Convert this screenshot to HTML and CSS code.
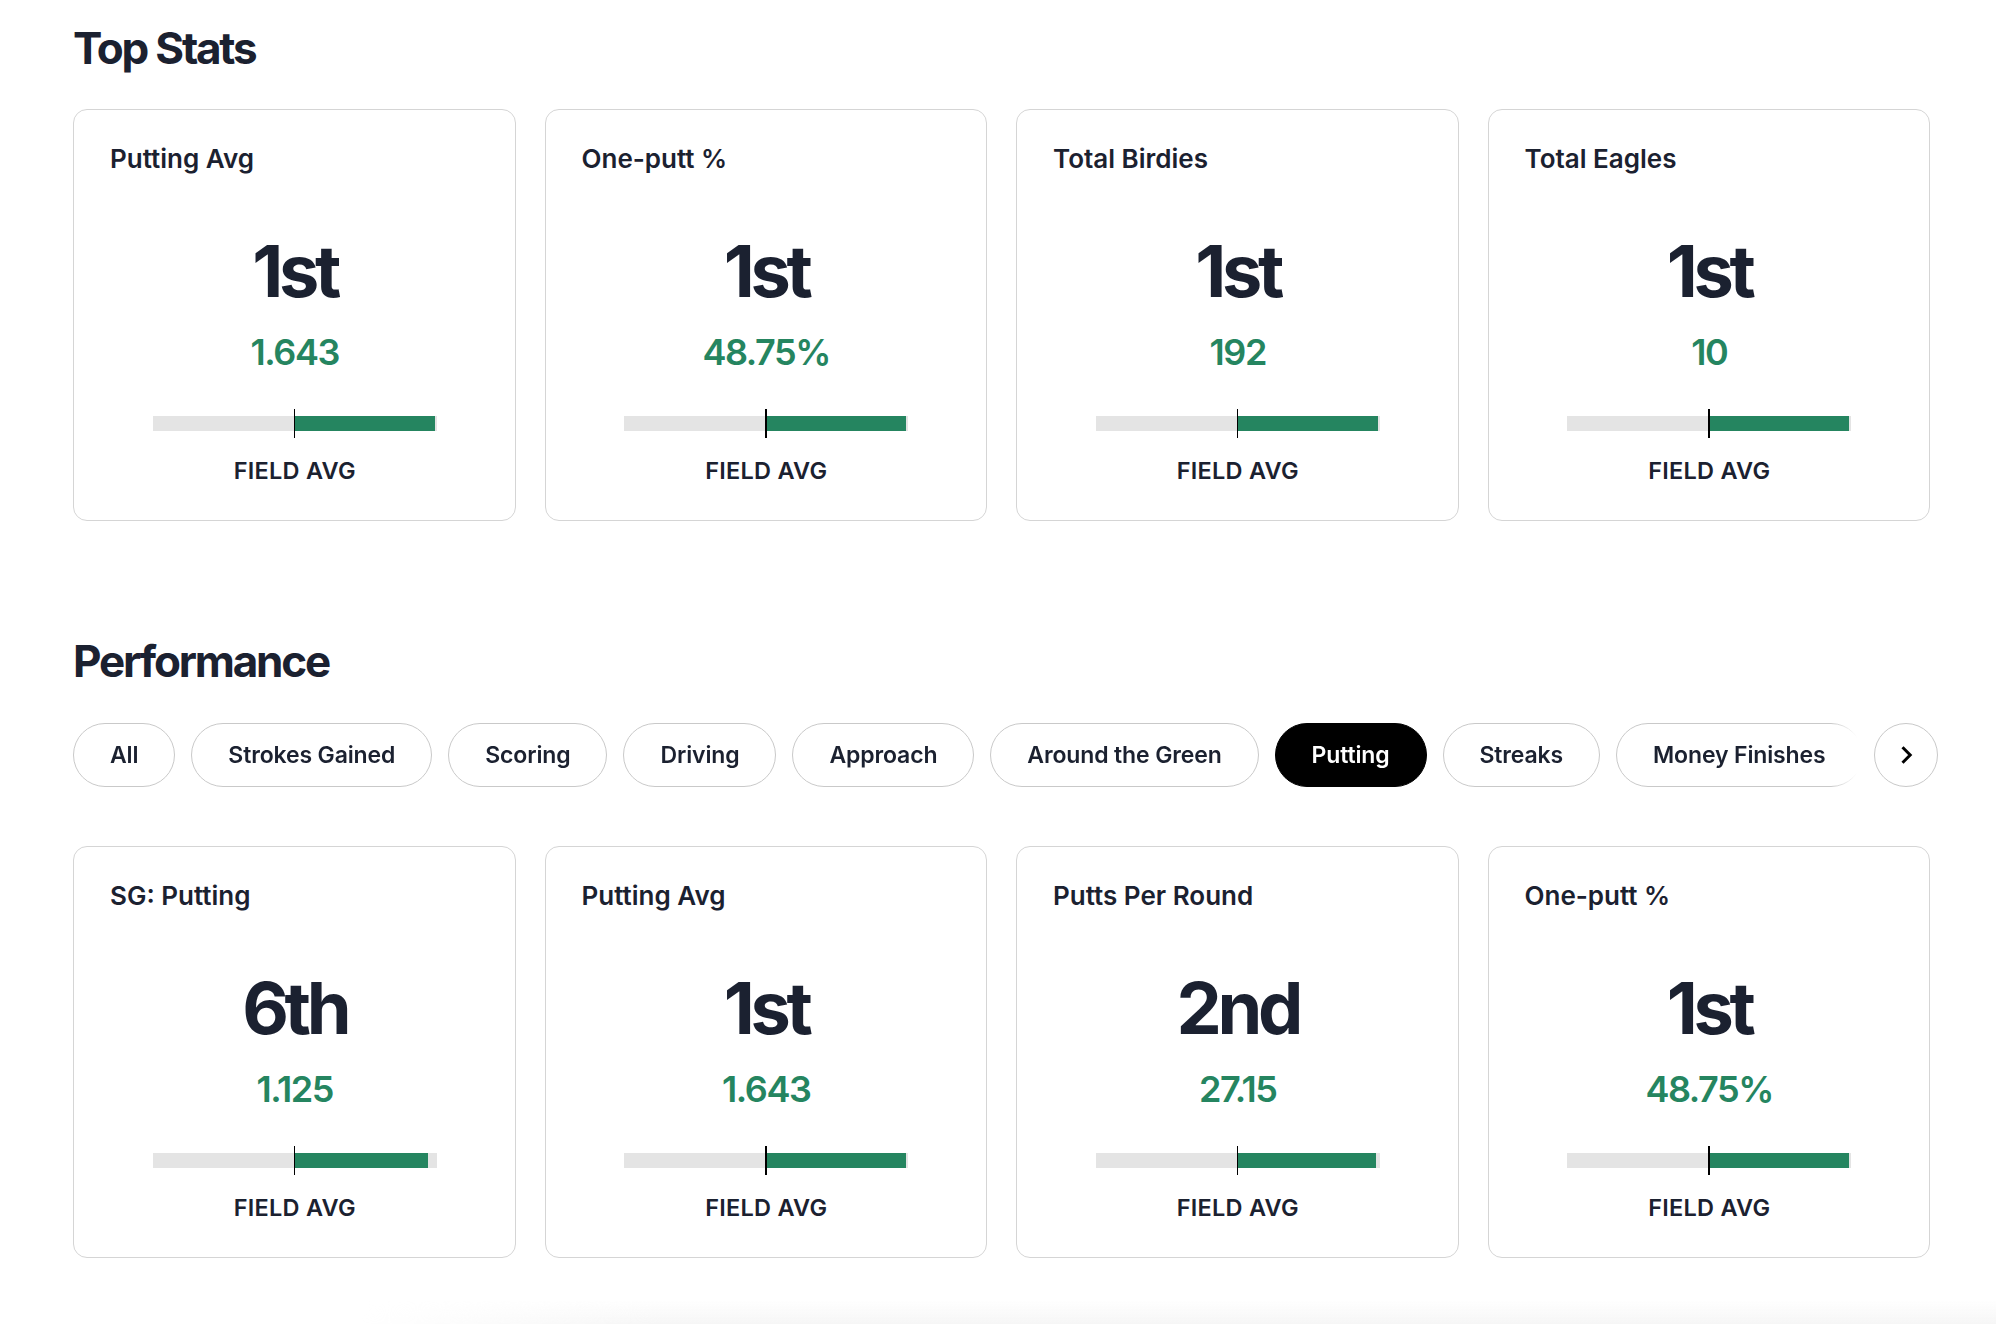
FILE: index.html
```html
<!DOCTYPE html>
<html lang="en">
<head>
<meta charset="utf-8">
<title>Stats</title>
<link rel="stylesheet" href="styles.css">
</head>
<body>
<main class="page">
  <section class="section section-top">
    <h2 class="section-title">Top Stats</h2>
    <div class="card-grid">
      <article class="stat-card">
        <h3 class="stat-title">Putting Avg</h3>
        <div class="stat-rank">1st</div>
        <div class="stat-value">1.643</div>
        <div class="bar"><div class="bar-fill" style="width:49.3%"></div><div class="bar-tick"></div></div>
        <div class="bar-label">FIELD AVG</div>
      </article>
      <article class="stat-card">
        <h3 class="stat-title">One-putt %</h3>
        <div class="stat-rank">1st</div>
        <div class="stat-value">48.75%</div>
        <div class="bar"><div class="bar-fill" style="width:49.3%"></div><div class="bar-tick"></div></div>
        <div class="bar-label">FIELD AVG</div>
      </article>
      <article class="stat-card">
        <h3 class="stat-title">Total Birdies</h3>
        <div class="stat-rank">1st</div>
        <div class="stat-value">192</div>
        <div class="bar"><div class="bar-fill" style="width:49.3%"></div><div class="bar-tick"></div></div>
        <div class="bar-label">FIELD AVG</div>
      </article>
      <article class="stat-card">
        <h3 class="stat-title">Total Eagles</h3>
        <div class="stat-rank">1st</div>
        <div class="stat-value">10</div>
        <div class="bar"><div class="bar-fill" style="width:49.3%"></div><div class="bar-tick"></div></div>
        <div class="bar-label">FIELD AVG</div>
      </article>
    </div>
  </section>

  <section class="section section-perf">
    <h2 class="section-title">Performance</h2>
    <div class="tab-row">
      <div class="tab-scroller">
        <button class="tab">All</button>
        <button class="tab">Strokes Gained</button>
        <button class="tab">Scoring</button>
        <button class="tab">Driving</button>
        <button class="tab">Approach</button>
        <button class="tab">Around the Green</button>
        <button class="tab tab-active">Putting</button>
        <button class="tab">Streaks</button>
        <button class="tab">Money Finishes</button>
      </div>
      <button class="tab-next" aria-label="Next">
        <svg viewBox="0 0 24 24" width="24" height="24" aria-hidden="true"><path d="M8.5 4.2 L16.2 12 L8.5 19.8" fill="none" stroke="#000" stroke-width="3"/></svg>
      </button>
    </div>
    <div class="card-grid">
      <article class="stat-card">
        <h3 class="stat-title">SG: Putting</h3>
        <div class="stat-rank">6th</div>
        <div class="stat-value">1.125</div>
        <div class="bar"><div class="bar-fill" style="width:47%"></div><div class="bar-tick"></div></div>
        <div class="bar-label">FIELD AVG</div>
      </article>
      <article class="stat-card">
        <h3 class="stat-title">Putting Avg</h3>
        <div class="stat-rank">1st</div>
        <div class="stat-value">1.643</div>
        <div class="bar"><div class="bar-fill" style="width:49.3%"></div><div class="bar-tick"></div></div>
        <div class="bar-label">FIELD AVG</div>
      </article>
      <article class="stat-card">
        <h3 class="stat-title">Putts Per Round</h3>
        <div class="stat-rank">2nd</div>
        <div class="stat-value">27.15</div>
        <div class="bar"><div class="bar-fill" style="width:48.6%"></div><div class="bar-tick"></div></div>
        <div class="bar-label">FIELD AVG</div>
      </article>
      <article class="stat-card">
        <h3 class="stat-title">One-putt %</h3>
        <div class="stat-rank">1st</div>
        <div class="stat-value">48.75%</div>
        <div class="bar"><div class="bar-fill" style="width:49.3%"></div><div class="bar-tick"></div></div>
        <div class="bar-label">FIELD AVG</div>
      </article>
    </div>
  </section>
  <div class="bottom-fade"></div>
</main>
</body>
</html>
```

FILE: styles.css
```css
* { box-sizing: border-box; }

html, body {
  margin: 0;
  padding: 0;
  background: #ffffff;
}

body {
  font-family: Inter, "Noto Sans", "Liberation Sans", sans-serif;
  color: #1b2130;
  overflow: hidden;
}

.page {
  padding-left: 73px;
  width: 1996px;
  height: 1324px;
  position: relative;
}

.section-title {
  margin: 0;
  font-size: 44px;
  line-height: 44px;
  font-weight: 700;
  letter-spacing: -0.05em;
  color: #1b2130;
}

.section-top {
  padding-top: 26px;
}

.section-perf {
  padding-top: 118px;
}

.card-grid {
  display: grid;
  grid-template-columns: repeat(4, 1fr);
  column-gap: 29px;
  width: 1857px;
  margin-top: 39px;
}

.section-perf .card-grid {
  margin-top: 59px;
}

.stat-card {
  border: 1px solid #d5d5d5;
  border-radius: 14px;
  padding: 33px 35px 35px 36px;
  display: flex;
  flex-direction: column;
  align-items: center;
  background: #fff;
}

.stat-title {
  align-self: stretch;
  margin: 0;
  font-size: 26px;
  line-height: 32px;
  font-weight: 600;
  letter-spacing: 0;
}

.stat-rank {
  margin-top: 60px;
  font-size: 72px;
  line-height: 72px;
  font-weight: 700;
  letter-spacing: -0.06em;
}

.stat-value {
  margin-top: 25px;
  font-size: 36px;
  line-height: 40px;
  font-weight: 600;
  letter-spacing: -0.04em;
  color: #258560;
}

.bar {
  position: relative;
  margin-top: 44px;
  width: 284px;
  height: 15px;
  background: #e4e4e4;
}

.bar-fill {
  position: absolute;
  left: 50%;
  top: 0;
  bottom: 0;
  background: #258560;
}

.bar-tick {
  position: absolute;
  left: calc(50% - 1px);
  top: -7px;
  width: 1.5px;
  height: 29px;
  background: #000;
}

.bar-label {
  margin-top: 26px;
  font-size: 23.5px;
  line-height: 28px;
  font-weight: 600;
  letter-spacing: 0.01em;
}

.tab-row {
  display: flex;
  align-items: center;
  margin-top: 40px;
  width: 1865px;
}

.tab-scroller {
  display: flex;
  gap: 16px;
  flex: 1;
  overflow: hidden;
  -webkit-mask-image: linear-gradient(to right, #000 calc(100% - 26px), transparent);
  mask-image: linear-gradient(to right, #000 calc(100% - 26px), transparent);
}

.tab {
  flex: none;
  height: 64px;
  padding: 0 36px;
  border: 1px solid #c9c9c9;
  border-radius: 32px;
  background: #fff;
  font-family: inherit;
  font-size: 23px;
  font-weight: 600;
  color: #1b2130;
  line-height: 1;
  letter-spacing: -0.006em;
}

.tab-active {
  background: #000;
  border-color: #000;
  color: #fff;
}

.tab-next {
  flex: none;
  margin-left: 17px;
  width: 64px;
  height: 64px;
  border: 1px solid #c9c9c9;
  border-radius: 50%;
  background: #fff;
  display: flex;
  align-items: center;
  justify-content: center;
  padding: 0;
}

.bottom-fade {
  position: absolute;
  left: 360px;
  right: 0;
  bottom: 0;
  height: 24px;
  background: linear-gradient(to bottom, rgba(246,246,246,0), #f6f6f6);
  -webkit-mask-image: linear-gradient(to right, transparent, #000 300px);
  mask-image: linear-gradient(to right, transparent, #000 300px);
}
```
